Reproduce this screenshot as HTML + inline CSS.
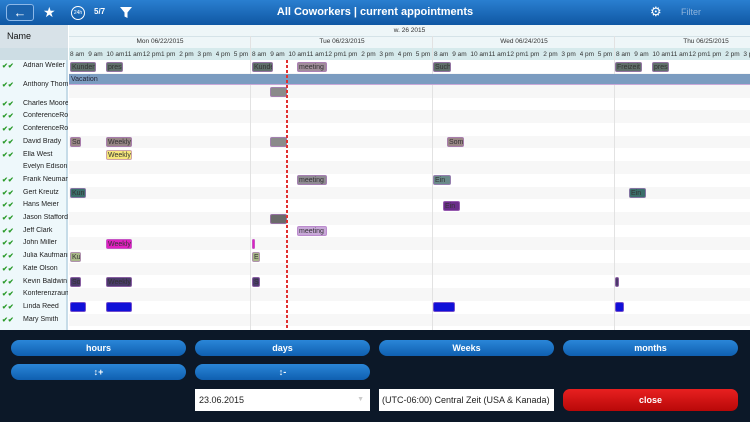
<!DOCTYPE html><html><head><style>
*{margin:0;padding:0;box-sizing:border-box}
body{width:750px;height:422px;overflow:hidden;font-family:"Liberation Sans",sans-serif;background:#0c1828;position:relative}
.a{position:absolute}
.hdr{left:0;top:0;width:750px;height:25px;background:linear-gradient(#2a7fd0,#0f57a3);}
.grid{left:0;top:25px;width:750px;height:305px;background:#fff;overflow:hidden}
.nm{font-size:7px;color:#222;left:23px;white-space:nowrap;width:45px;overflow:hidden}
.ck{font-size:7px;color:#2a9a2a;left:2px;font-weight:bold}
.ev{position:absolute;height:10px;font-size:7px;line-height:10px;color:#333;border-radius:2px;overflow:hidden;white-space:nowrap;padding-left:1px;border:1px solid rgba(180,120,200,.6)}
.btn{position:absolute;height:16px;border-radius:8px;background:linear-gradient(#2a86d8,#0f5fb0);color:#fff;font-size:9px;font-weight:bold;text-align:center;line-height:16px}
.hr{position:absolute;top:24px;font-size:6.5px;color:#333;white-space:nowrap;width:18px;overflow:hidden;line-height:12px}
</style></head><body>
<div class="a hdr"></div>
<div class="a" style="left:6px;top:4px;width:28px;height:17px;border:1px solid #8cb8e8;border-radius:4px 3px 3px 4px;background:#1b63ad;color:#fff;font-size:13px;line-height:15px;text-align:center;font-weight:bold">&#8592;</div>
<div class="a" style="left:43px;top:4px;color:#fff;font-size:14px">&#9733;</div>
<div class="a" style="left:71px;top:6px;width:14px;height:14px;border:1px solid #fff;border-radius:50%;color:#fff;font-size:5px;line-height:12px;text-align:center">24h</div>
<div class="a" style="left:94px;top:7px;color:#fff;font-size:8px;font-weight:bold">5/7</div>
<svg class="a" style="left:119px;top:6px" width="14" height="13"><path d="M1 1H13L8.5 6.5V12L5.5 10.5V6.5Z" fill="#fff"/></svg>
<div class="a" style="left:0;top:6px;width:750px;text-align:center;color:#fff;font-size:11px;font-weight:bold">All Coworkers | current appointments</div>
<div class="a" style="left:650px;top:4px;color:#fff;font-size:13px">&#9881;</div>
<div class="a" style="left:681px;top:7px;color:#8fb4dc;font-size:9px">Filter</div>

<div class="a grid">
<div class="a" style="left:0;top:0;width:68px;height:305px;background:#eef8fb;border-right:2px solid #c6dce8"></div>
<div class="a" style="left:0;top:0;width:68px;height:23px;background:#d8e2e8;font-size:9px;color:#111;padding:6px 0 0 7px">Name</div>
<div class="a" style="left:0;top:23px;width:68px;height:12px;background:#cddde4"></div>
<div class="a" style="left:69px;top:0;width:681px;height:11px;background:#eef6f8;font-size:6.5px;color:#333;text-align:center;line-height:11px">w. 26 2015</div>
<div class="a" style="left:69px;top:11px;width:681px;height:12px;background:#eef6f8;border-top:1px solid #d5e3e8"></div>
<div class="a" style="left:69px;top:23px;width:681px;height:12px;background:#d6eaec"></div>
<div class="a" style="left:69px;top:13px;width:182px;text-align:center;font-size:6.5px;color:#333">Mon 06/22/2015</div>
<div class="a" style="left:251px;top:13px;width:182px;text-align:center;font-size:6.5px;color:#333">Tue 06/23/2015</div>
<div class="a" style="left:433px;top:13px;width:182px;text-align:center;font-size:6.5px;color:#333">Wed 06/24/2015</div>
<div class="a" style="left:615px;top:13px;width:182px;text-align:center;font-size:6.5px;color:#333">Thu 06/25/2015</div>
<div id="hrs"></div>
<div id="rows"></div>
<div class="a" style="left:250px;top:11px;width:1px;height:294px;background:#e2e2e2"></div>
<div class="a" style="left:432px;top:11px;width:1px;height:294px;background:#e2e2e2"></div>
<div class="a" style="left:614px;top:11px;width:1px;height:294px;background:#e2e2e2"></div>
<div id="evs"></div>
<div class="a" style="left:286px;top:35px;width:2px;height:270px;background:repeating-linear-gradient(#e03030 0 3px,transparent 3px 5px)"></div>
</div>

<div class="btn" style="left:11px;top:340px;width:175px">hours</div>
<div class="btn" style="left:195px;top:340px;width:175px">days</div>
<div class="btn" style="left:379px;top:340px;width:175px">Weeks</div>
<div class="btn" style="left:563px;top:340px;width:175px">months</div>
<div class="btn" style="left:11px;top:364px;width:175px">&#8597;+</div>
<div class="btn" style="left:195px;top:364px;width:175px">&#8597;-</div>
<div class="a" style="left:195px;top:389px;width:175px;height:22px;background:#fff;font-size:9px;line-height:22px;padding-left:4px;color:#222">23.06.2015<span style="position:absolute;right:6px;color:#ccc;font-size:7px">&#9660;</span></div>
<div class="a" style="left:379px;top:389px;width:175px;height:22px;background:#fff;font-size:9px;line-height:22px;padding-left:3px;color:#222;overflow:hidden;white-space:nowrap">(UTC-06:00) Central Zeit (USA &amp; Kanada)</div>
<div class="a" style="left:563px;top:389px;width:175px;height:22px;border-radius:7px;background:linear-gradient(#e82020,#b80808);color:#fff;font-size:9px;font-weight:bold;text-align:center;line-height:22px">close</div>

<script>
var h=['8 am','9 am','10 am','11 am','12 pm','1 pm','2 pm','3 pm','4 pm','5 pm'],s='';
for(var d=0;d<4;d++)for(var i=0;i<10;i++){var x=69+d*182+i*18.2;s+='<div class="hr" style="left:'+(x+1)+'px">'+h[i]+'</div>';}
document.getElementById('hrs').innerHTML=s;
var names=[['Adrian Weiler',1],['Anthony Thompson',1],['Charles Moore',1],['ConferenceRoom',1],['ConferenceRoom',1],['David Brady',1],['Ella West',1],['Evelyn Edison',0],['Frank Neumann',1],['Gert Kreutz',1],['Hans Meier',1],['Jason Stafford',1],['Jeff Clark',1],['John Miller',1],['Julia Kaufmann',1],['Kate Olson',1],['Kevin Baldwin',1],['Konferenzraum',1],['Linda Reed',1],['Mary Smith',1]];
var tops=[],r='',y=35;
for(var k=0;k<names.length;k++){var hh=k==1?25:12.7;tops.push(y);
if(k%2==1)r+='<div class="a" style="left:69px;top:'+y+'px;width:681px;height:'+hh+'px;background:#f7f7f7"></div>';
var ty=k==1?y+8:y+2;
r+='<div class="a nm" style="top:'+ty+'px">'+names[k][0]+'</div>';
if(names[k][1])r+='<div class="a ck" style="top:'+ty+'px">&#10004;&#10004;</div>';
y+=hh;}
document.getElementById('rows').innerHTML=r;
r='<div class="a" style="left:69px;top:49px;width:681px;height:11px;background:#7b9cc0;font-size:7px;color:#223;padding-left:2px;line-height:11px;border-bottom:1px solid #c9a8d8">Vacation</div>';
var ev=[[0,70,96,'#5f6f6a','Kunden'],[0,106,123,'#5f6f6a','pres'],[0,252,273,'#5f6f6a','Kunde'],[0,297,327,'#a08c9a','meeting'],[0,433,451,'#5f6f6a','Such'],[0,615,642,'#5f6f6a','Freizeit'],[0,652,669,'#5f6f6a','pres'],
[5,70,81,'#9a8686','So'],[5,106,132,'#978585','Weekly'],[5,270,287,'#8a8a8a',''],[5,447,464,'#9a8686','Som'],
[6,106,132,'#f5e67a','Weekly'],[8,297,327,'#8f8a92','meeting'],[8,433,451,'#6a8a8a','Ein'],
[9,70,86,'#3a6e6a','Kun'],[9,629,646,'#3a6e6a','Ein'],[10,443,460,'#6a2d8a','Ein'],[11,270,287,'#6a6a6a',''],
[12,297,327,'#c8a8d8','meeting'],[13,106,132,'#e020c0','Weekly'],[13,252,255,'#e020c0',''],
[14,70,81,'#a8b888','Ku'],[14,252,260,'#a8b888','E'],
[16,70,81,'#4a3a6a','So'],[16,106,132,'#4a3a6a','Weekly'],[16,252,260,'#4a3a6a','S'],[16,615,619,'#4a3a6a',''],
[18,70,86,'#1010d8',''],[18,106,132,'#1010d8',''],[18,433,455,'#1010d8',''],[18,615,624,'#1010d8','']];
for(var e of ev){var t=tops[e[0]]+1.5;r+='<div class="ev" style="left:'+e[1]+'px;top:'+t+'px;width:'+(e[2]-e[1])+'px;background:'+e[3]+'">'+e[4]+'</div>';}
r+='<div class="ev" style="left:270px;top:62px;width:17px;background:#8a8a8a"></div>';
document.getElementById('evs').innerHTML=r;
</script>
</body></html>
